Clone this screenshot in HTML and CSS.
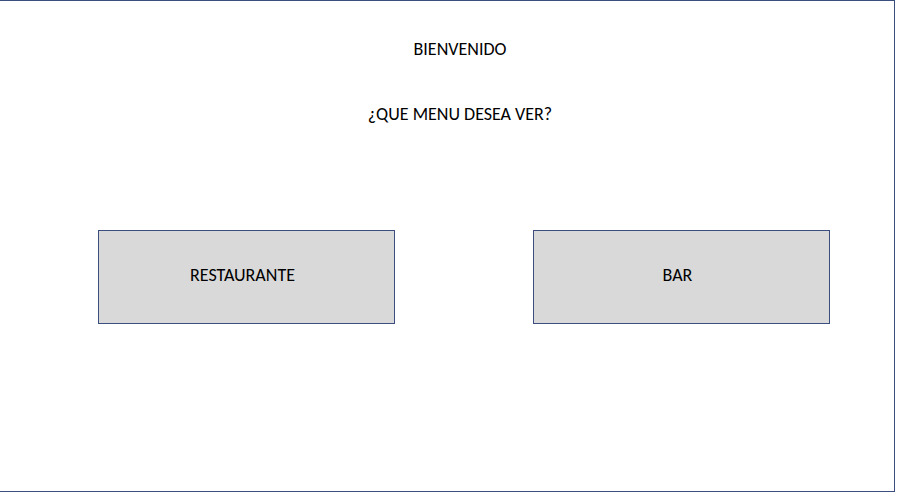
FILE: index.html
```html
<!DOCTYPE html>
<html lang="es">
<head>
<meta charset="utf-8">
<title>Bienvenido</title>
<link rel="stylesheet" href="styles.css">
</head>
<body>
<main class="screen">
  <header class="intro">
    <h1 class="title">BIENVENIDO</h1>
    <p class="question">¿QUE MENU DESEA VER?</p>
  </header>
  <nav class="choices">
    <button class="choice" type="button">RESTAURANTE</button>
    <button class="choice" type="button">BAR</button>
  </nav>
</main>
</body>
</html>
```
FILE: styles.css
```css
* {
  box-sizing: border-box;
}

body {
  margin: 0;
  background: #fff;
  color: #000;
  font: 18px/20px Carlito, Calibri, Lato, sans-serif;
}

.screen {
  min-height: calc(100vh - 1px);
  margin-right: 2px;
  padding: 38px 64px 0 98px;
  border: 1px solid #3a4f7f;
  border-left: 0;
}

.intro {
  padding-right: 8px;
  text-align: center;
}

.title,
.question {
  margin: 0;
  font-size: 18px;
  font-weight: 400;
}

.question {
  margin-top: 45px;
}

.choices {
  display: grid;
  grid-template-columns: 1fr 1fr;
  gap: 138px;
  margin-top: 106px;
}

.choice {
  height: 94px;
  padding: 0 8px 4px 0;
  border: 1px solid #3a4f7f;
  background: #d9d9d9;
  color: inherit;
  font: inherit;
}
```
